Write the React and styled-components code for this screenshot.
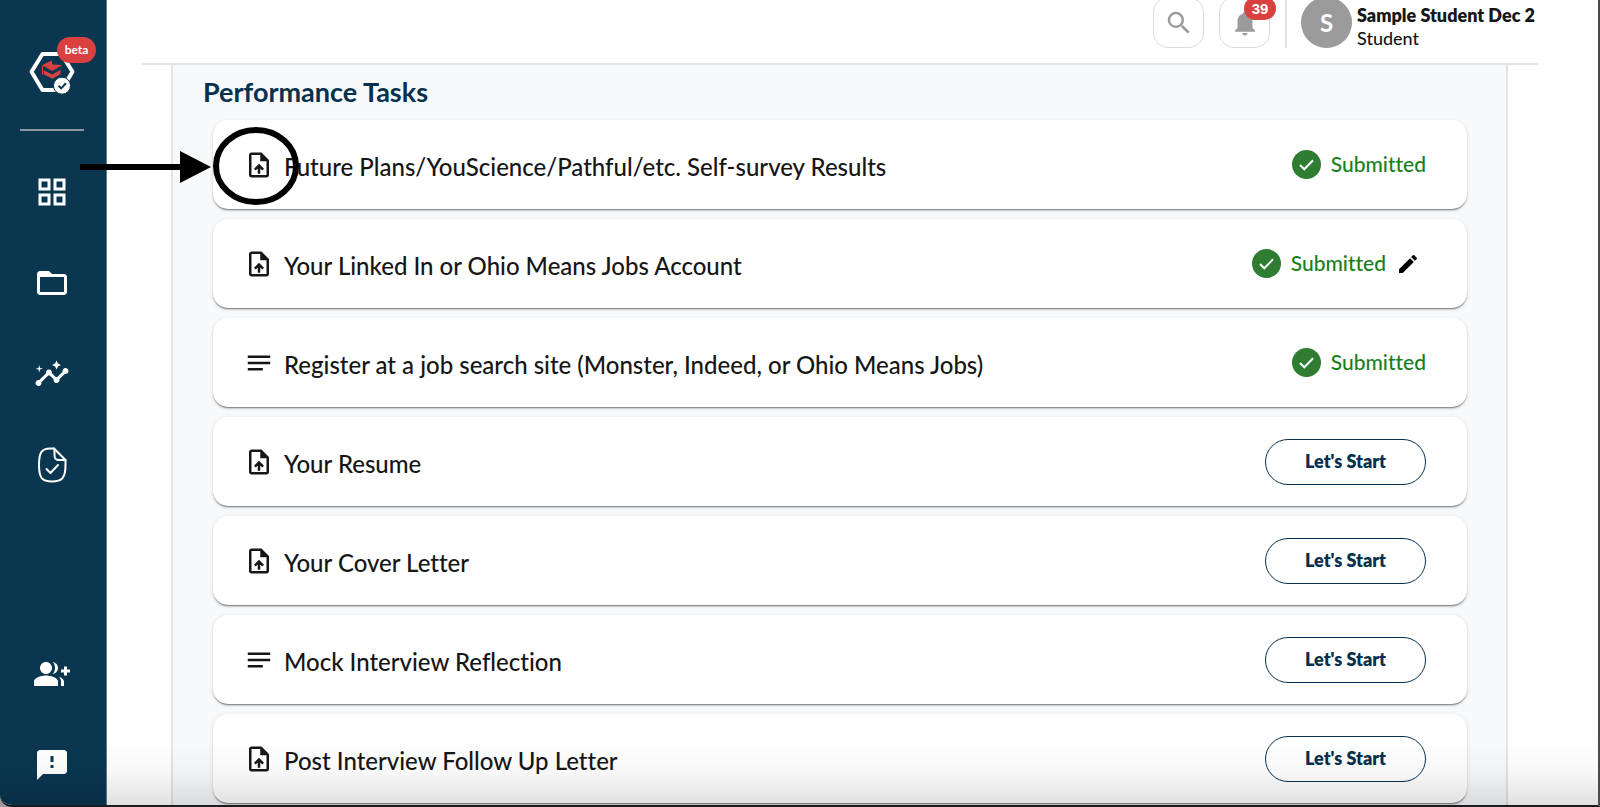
import React from 'react'
import styled, { createGlobalStyle, css, ThemeProvider } from 'styled-components'
import {
  MdGridView,
  MdFolderOpen,
  MdInsights,
  MdGroupAdd,
  MdFeedback,
  MdSearch,
  MdNotifications,
  MdOutlineUploadFile,
  MdNotes,
  MdEdit,
} from 'react-icons/md'

const theme = {
  navy: '#0a3650',
  navyText: '#06304f',
  red: '#d94141',
  greenText: '#17801c',
  grey: '#9b9b9b',
  line: '#e3e4e6',
  panel: '#f7f9fb',
}

const GlobalStyle = createGlobalStyle`
  * {
    box-sizing: border-box;
  }
  body {
    margin: 0;
    background: #9a9a9d;
    font-family: Lato, "Liberation Sans", sans-serif;
    font-variant-ligatures: none;
    color: #161616;
  }
`

const Window = styled.div`
  position: relative;
  display: flex;
  height: 100vh;
  overflow: hidden;
  background: white;
  border-right: 2px solid #4a4a4c;
  border-bottom: 2px solid #1c1c1e;
  border-bottom-left-radius: 12px;
`

const BottomShade = styled.div`
  position: absolute;
  left: 0;
  right: 0;
  bottom: 0;
  height: 64px;
  background: linear-gradient(rgba(0, 0, 0, 0), rgba(0, 0, 0, 0.03) 50%, rgba(0, 0, 0, 0.12));
  pointer-events: none;
`

const Sidebar = styled.nav`
  display: flex;
  flex-direction: column;
  align-items: center;
  flex-shrink: 0;
  width: 107px;
  padding: 50px 2px 22px 0;
  background: ${props => props.theme.navy};
  border-right: 1px solid #5f7c8d;
`

const LogoLink = styled.a`
  position: relative;
  display: block;
  width: 46px;
  height: 46px;

  svg {
    display: block;
  }
`

const Beta = styled.span`
  position: absolute;
  top: -13px;
  left: 28px;
  width: 39px;
  border-radius: 13px;
  background: ${props => props.theme.red};
  color: white;
  font-size: 12px;
  font-weight: 700;
  line-height: 26px;
  text-align: center;
`

const SideRule = styled.hr`
  width: 64px;
  height: 2px;
  margin: 33px 0 43px;
  border: none;
  background: #8c989f;
`

const NavGroup = styled.div`
  display: flex;
  flex-direction: column;
  gap: 55px;

  & + & {
    margin-top: auto;
  }
`

const NavLink = styled.a`
  display: block;
  height: 36px;
  color: white;

  svg {
    display: block;
    width: 36px;
    height: 36px;
  }
`

const Main = styled.main`
  flex: 1;
  min-width: 0;
`

const Header = styled.header`
  display: flex;
  justify-content: flex-end;
  align-items: flex-end;
  height: 65px;
  margin: 0 60px 0 35px;
  padding-bottom: 15px;
  border-bottom: 2px solid ${props => props.theme.line};
`

const IconButton = styled.button`
  position: relative;
  display: flex;
  align-items: center;
  justify-content: center;
  flex-shrink: 0;
  width: 51px;
  height: 51px;
  margin-right: 15px;
  padding: 0;
  border: 1px solid #dcdcdc;
  border-radius: 15px;
  background: white;
  color: ${props => props.theme.grey};
`

const Count = styled.span`
  position: absolute;
  top: -1px;
  right: -7px;
  width: 32px;
  border-radius: 12px;
  background: ${props => props.theme.red};
  color: white;
  font-size: 15px;
  font-weight: 700;
  line-height: 23px;
  text-align: center;
`

const Account = styled.div`
  display: flex;
  align-items: center;
  gap: 5px;
  height: 51px;
  padding-left: 14px;
  border-left: 2px solid ${props => props.theme.line};
`

const Avatar = styled.div`
  width: 51px;
  border-radius: 50%;
  background: ${props => props.theme.grey};
  color: white;
  font-size: 24px;
  font-weight: 700;
  line-height: 51px;
  text-align: center;
`

const AccountText = styled.div`
  min-width: 181px;
  padding-top: 8px;
  font-size: 18px;
  font-weight: 500;
  line-height: 23px;
  white-space: nowrap;
`

const AccountName = styled.div`
  font-weight: 800;
`

const Panel = styled.section`
  margin: 0 90px 0 64px;
  padding: 12px 39px 12px 40px;
  border: 2px solid ${props => props.theme.line};
  border-width: 0 2px;
  background: ${props => props.theme.panel};
`

const PanelTitle = styled.h1`
  margin: 0 0 13px -10px;
  color: ${props => props.theme.navyText};
  font-size: 27px;
  font-weight: 700;
  line-height: 30px;
`

const TaskList = styled.ul`
  display: flex;
  flex-direction: column;
  gap: 10px;
  margin: 0;
  padding: 0;
  list-style: none;
`

const TaskCard = styled.li`
  display: flex;
  align-items: center;
  height: 89px;
  padding: 0 41px 0 31px;
  border-radius: 15px;
  background: white;
  box-shadow: 0 2px 2px -1px rgba(0, 0, 0, 0.4), 0 1px 1px rgba(0, 0, 0, 0.14), 0 1px 4px rgba(0, 0, 0, 0.12);
`

const TaskName = styled.h2`
  flex: 1;
  margin: 0;
  padding: 4px 0 0 10px;
  font-size: 24px;
  font-weight: 500;
  line-height: 28px;
`

const Status = styled.div`
  display: flex;
  align-items: center;
  gap: 8px;
  color: ${props => props.theme.greenText};
  font-size: 21px;
  font-weight: 500;
  line-height: 28px;
`

const StatusLabel = styled.span`
  padding: 0 0 2px 2px;
`

const outlined = css`
  border: 1px solid ${props => props.theme.navyText};
  border-radius: 23px;
`

const StartButton = styled.button`
  ${outlined}
  width: 161px;
  height: 46px;
  padding-bottom: 2px;
  background: white;
  color: ${props => props.theme.navyText};
  font-family: inherit;
  font-size: 18px;
  font-weight: 800;
`

const EditButton = styled.button`
  display: flex;
  padding: 0 6px 0 2px;
  border: none;
  background: none;
  color: black;
`

const Pointer = styled.svg`
  position: absolute;
  top: 126px;
  left: 79px;
`

const Logo = () => (
  <svg width="46" height="46" viewBox="0 0 46 46" fill="none">
    <path d="M13.500 4h19L43.500 21.700l-11 18.300h-19L2.500 21.700z" stroke="white" strokeWidth="4" strokeLinejoin="round" />
    <path d="M13 15.300l9.700-4.800.6 4 10 .6-10 6z" fill="#d94141" />
    <path d="M14.700 20.300l8.500 4.200 8.300-4.800v4.500l-8.200 4.600-8.600-4.500z" fill="#d94141" />
    <path d="M13.500 16v8.500" stroke="#d94141" />
    <circle cx="33" cy="35.700" r="8.500" fill="white" stroke="#0a3650" />
    <path d="M29.500 35.700l2.700 2.700 4.800-5.200" stroke="#0a3650" strokeWidth="2" />
  </svg>
)

const FileCheckIcon = () => (
  <svg viewBox="0 0 36 36" fill="none" stroke="white" strokeWidth="2" strokeLinecap="round" strokeLinejoin="round">
    <path d="M20 1.500h-4C8 1.500 5 5 5 18s3 16.500 13 16.500S31.500 31 31.500 18v-5z" />
    <path d="M20 1.500c.8 2 .5 4 .5 6.500 0 4 1 5 4.500 5h6.500" />
    <path d="M12.500 22l4 4 7.500-8" />
  </svg>
)

const CheckCircle = () => (
  <svg width="29" height="29" viewBox="0 0 29 29" fill="none">
    <circle cx="14.500" cy="14.500" r="14.500" fill="#2e7d32" />
    <path d="M8 15l4.300 4.300 8.700-9" stroke="white" strokeWidth="2" />
  </svg>
)

const tasks = [
  { name: 'Future Plans/YouScience/Pathful/etc. Self-survey Results', type: 'file', submitted: true },
  { name: 'Your Linked In or Ohio Means Jobs Account', type: 'file', submitted: true, editable: true },
  { name: 'Register at a job search site (Monster, Indeed, or Ohio Means Jobs)', type: 'text', submitted: true },
  { name: 'Your Resume', type: 'file' },
  { name: 'Your Cover Letter', type: 'file' },
  { name: 'Mock Interview Reflection', type: 'text' },
  { name: 'Post Interview Follow Up Letter', type: 'file' },
]

const Task = ({ name, type, submitted, editable }) => (
  <TaskCard>
    {type === 'file' ? <MdOutlineUploadFile size={30} /> : <MdNotes size={30} />}
    <TaskName>{name}</TaskName>
    {submitted ? (
      <Status>
        <CheckCircle />
        <StatusLabel>Submitted</StatusLabel>
        {editable && (
          <EditButton aria-label="Edit">
            <MdEdit size={24} />
          </EditButton>
        )}
      </Status>
    ) : (
      <StartButton>Let's Start</StartButton>
    )}
  </TaskCard>
)

const App = () => (
  <ThemeProvider theme={theme}>
    <GlobalStyle />
    <Window>
      <Sidebar>
        <LogoLink href="#home" aria-label="Home">
          <Logo />
          <Beta>beta</Beta>
        </LogoLink>
        <SideRule />
        <NavGroup>
          <NavLink href="#dashboard" aria-label="Dashboard"><MdGridView /></NavLink>
          <NavLink href="#files" aria-label="Files"><MdFolderOpen /></NavLink>
          <NavLink href="#insights" aria-label="Insights"><MdInsights /></NavLink>
          <NavLink href="#tasks" aria-label="Tasks"><FileCheckIcon /></NavLink>
        </NavGroup>
        <NavGroup>
          <NavLink href="#invite" aria-label="Invite"><MdGroupAdd /></NavLink>
          <NavLink href="#feedback" aria-label="Feedback"><MdFeedback /></NavLink>
        </NavGroup>
      </Sidebar>
      <Main>
        <Header>
          <IconButton aria-label="Search"><MdSearch size={30} /></IconButton>
          <IconButton aria-label="Notifications">
            <MdNotifications size={30} />
            <Count>39</Count>
          </IconButton>
          <Account>
            <Avatar>S</Avatar>
            <AccountText>
              <AccountName>Sample Student Dec 2</AccountName>
              <div>Student</div>
            </AccountText>
          </Account>
        </Header>
        <Panel>
          <PanelTitle>Performance Tasks</PanelTitle>
          <TaskList>
            {tasks.map(task => <Task key={task.name} {...task} />)}
          </TaskList>
        </Panel>
      </Main>
      <Pointer width="222" height="80" viewBox="0 0 222 80" fill="none">
        <path d="M1 41h102" stroke="black" strokeWidth="6" />
        <path d="M101 25l31 16-31 16z" fill="black" />
        <ellipse cx="177" cy="40" rx="40" ry="36" stroke="black" strokeWidth="6" />
      </Pointer>
      <BottomShade />
    </Window>
  </ThemeProvider>
)

export default App
